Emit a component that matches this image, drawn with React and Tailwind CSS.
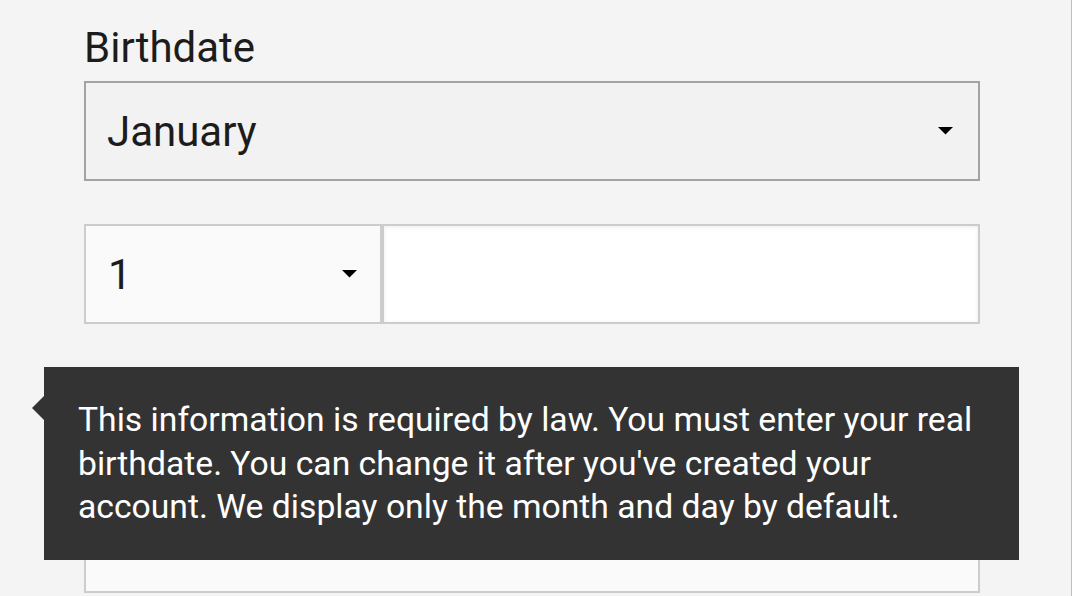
export default function App() {
  return (
    <div className="relative w-[1072px] h-[596px] overflow-hidden bg-[#f4f4f4] border-r border-[#bdbdbd] font-['Roboto',sans-serif] text-[#1c1c1c]">
      <div className="pl-[84px] pr-[91px] pt-[23px]">
        <div className="text-[42px] leading-[49px]">Birthdate</div>

        <div className="mt-[9px] h-[100px] flex items-center justify-between border-2 border-[#a3a3a3] bg-[#f2f2f2] pl-[21px] pr-[24px]">
          <span className="text-[42px] leading-[49px]">January</span>
          <svg width="15" height="8" viewBox="0 0 15 8" className="mr-[1px]">
            <path d="M0 0 L15 0 L7.5 7.5 Z" fill="#000" />
          </svg>
        </div>

        <div className="mt-[43px] h-[100px] flex">
          <div className="w-[298px] flex items-center justify-between border-2 border-[#cccccc] bg-[#fafafa] pl-[22px] pr-[23px]">
            <span className="text-[42px] leading-[49px]">1</span>
            <svg width="15" height="8" viewBox="0 0 15 8">
              <path d="M0 0 L15 0 L7.5 7.5 Z" fill="#000" />
            </svg>
          </div>
          <div className="flex-1 border-2 border-[#cccccc] bg-white shadow-[inset_0_1px_4px_rgba(0,0,0,0.08)]" />
        </div>

        <div className="mt-[169px] h-[100px] border-2 border-[#cccccc] bg-[#fafafa]" />
      </div>

      <div className="absolute left-[44px] top-[367px] w-[975px] h-[193px] bg-[#333333] text-white pl-[34px] pr-[28px] pt-[31px]">
        <svg width="13" height="26" viewBox="0 0 13 26" className="absolute left-[-12px] top-[28px]">
          <path d="M13 0 L0 13 L13 26 Z" fill="#333333" />
        </svg>
        <p className="text-[33.7px] leading-[43.5px]">
          This information is required by law. You must enter your real birthdate. You can change it after you've created your account. We display only the month and day by default.
        </p>
      </div>
    </div>
  );
}
